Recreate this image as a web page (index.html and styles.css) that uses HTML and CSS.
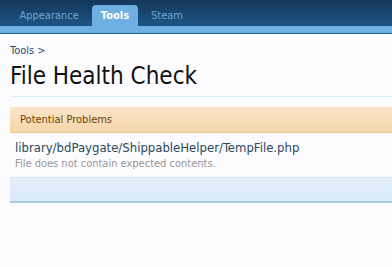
FILE: index.html
```html
<!DOCTYPE html>
<html lang="en">
<head>
    <meta charset="UTF-8">
    <title>File Health Check</title>
    <link rel="stylesheet" href="styles.css">
</head>
<body>
    <!-- Top navigation -->
    <div class="nav">
        <div class="tabs">
            <span class="tab">Styles</span>
            <span class="tab">Appearance</span>
            <span class="tab selected">Tools</span>
            <span class="tab">Steam</span>
        </div>
    </div>
    <div class="subnav"></div>

    <div class="content">
        <div class="breadcrumb">Tools &gt;</div>
        <h1 class="title">File Health Check</h1>

        <div class="section">
            <div class="section-head">Potential Problems</div>
            <div class="problem">
                <div class="problem-file">library/bdPaygate/ShippableHelper/TempFile.php</div>
                <div class="problem-text">File does not contain expected contents.</div>
            </div>
            <div class="section-foot"></div>
        </div>
    </div>
</body>
</html>
```

FILE: styles.css
```css
* {
    margin: 0;
    padding: 0;
    box-sizing: border-box;
}
body {
    background: #fcfcff;
    font-family: 'DejaVu Sans Condensed', 'DejaVu Sans', sans-serif;
    color: #2b485c;
    overflow: hidden;
}

/* Top navigation */
.nav {
    height: 26px;
    background: linear-gradient(to bottom, #15385a, #1d5486);
    overflow: hidden;
}
.tabs {
    display: flex;
    align-items: flex-end;
    justify-content: flex-end;
    width: 183px;
    height: 26px;
}
.tab {
    flex-shrink: 0;
    color: #6aa8dc;
    font-size: 11px;
    height: 21px;
    line-height: 22px;
    padding: 0 10px;
    margin-left: 3px;
}
.tab:first-child {
    padding-right: 8px;
}
.tab:last-child {
    padding-right: 0;
}
.tab.selected {
    background: #6fb0e3;
    color: #fff;
    font-weight: bold;
    padding: 0 9px;
    border-radius: 4px 4px 0 0;
}
.subnav {
    height: 7px;
    background: #70b1e3;
    border-bottom: 1px solid #1d5a8a;
    box-sizing: content-box;
}

/* Content */
.content {
    padding: 0 0 0 10px;
}
.breadcrumb {
    font-size: 11px;
    color: #2b4d6d;
    margin-top: 10px;
    line-height: 14px;
}
.title {
    font-size: 24px;
    font-weight: normal;
    color: #111;
    line-height: 28px;
    margin-top: 4px;
    padding-bottom: 6px;
    border-bottom: 1px solid #d7edfc;
}
.section {
    margin-top: 10px;
}
.section-head {
    height: 26px;
    line-height: 25px;
    padding-left: 10px;
    font-size: 11px;
    color: #6d3f03;
    background: linear-gradient(to bottom, #fbe5c8, #f6d6aa);
    border-bottom: 1px solid #f3c88b;
}
.problem {
    padding: 6px 5px 5px 5px;
}
.problem-file {
    font-size: 13px;
    color: #2b485c;
    line-height: 17px;
}
.problem-text {
    font-size: 11px;
    color: #969696;
    line-height: 16px;
}
.section-foot {
    height: 26px;
    background: linear-gradient(to bottom, #e3effb, #d8e9f8);
    border-top: 1px solid #d2e6f6;
    border-bottom: 2px solid #a5cae4;
}
```
